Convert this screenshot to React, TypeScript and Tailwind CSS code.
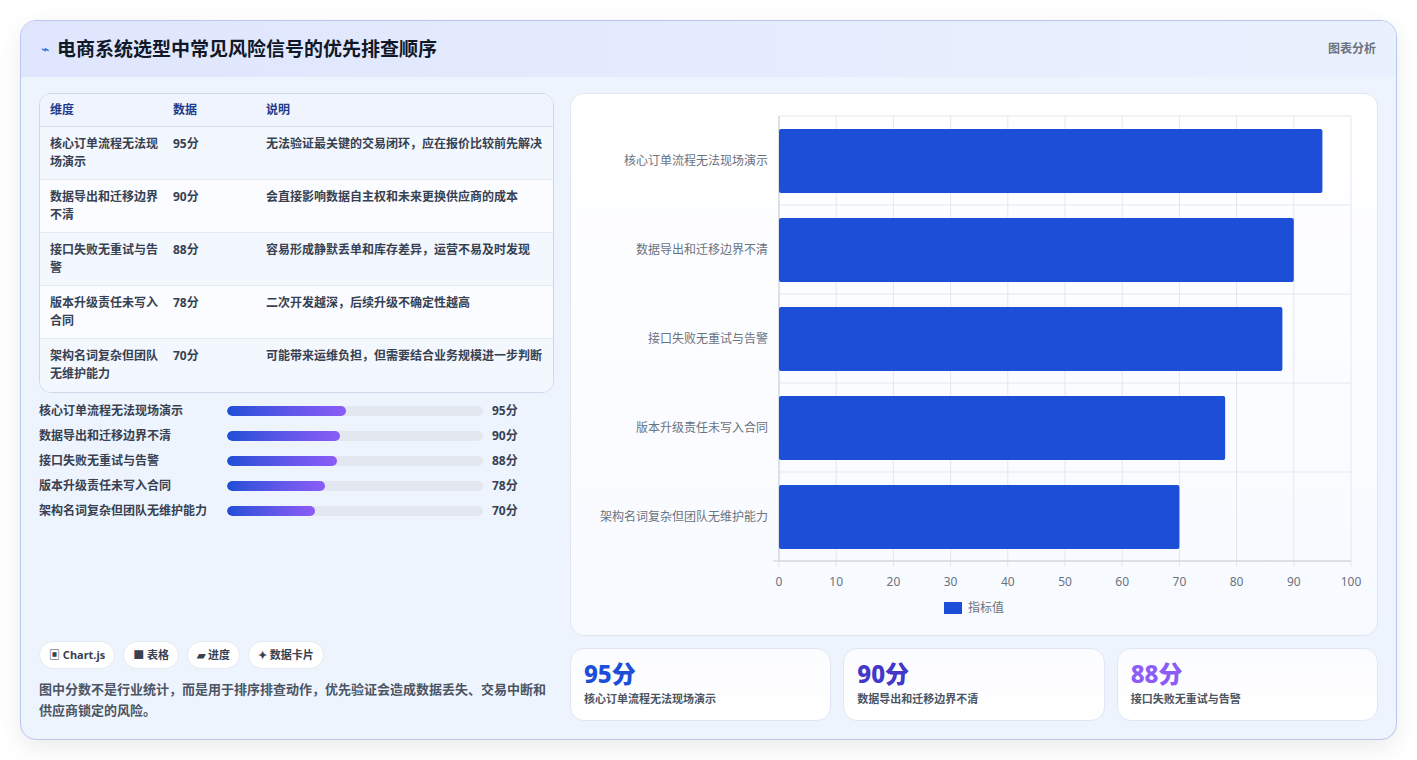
import React from "react";

const rows = [
  ["核心订单流程无法现场演示", 95, "无法验证最关键的交易闭环，应在报价比较前先解决"],
  ["数据导出和迁移边界不清", 90, "会直接影响数据自主权和未来更换供应商的成本"],
  ["接口失败无重试与告警", 88, "容易形成静默丢单和库存差异，运营不易及时发现"],
  ["版本升级责任未写入合同", 78, "二次开发越深，后续升级不确定性越高"],
  ["架构名词复杂但团队无维护能力", 70, "可能带来运维负担，但需要结合业务规模进一步判断"],
] as const;

function Chart() {
  const L = 208, R = 780, T = 22, B = 467;
  const w = R - L;
  const rh = (B - T) / 5;
  return (
    <svg width="806" height="542" className="block">
      {Array.from({ length: 11 }).map((_, i) => (
        <line key={i} x1={L + (w * i) / 10} x2={L + (w * i) / 10} y1={T} y2={B + 6} stroke="#e3e7ee" />
      ))}
      {Array.from({ length: 6 }).map((_, i) => (
        <line key={i} x1={L} x2={R} y1={T + rh * i} y2={T + rh * i} stroke="#e3e7ee" />
      ))}
      <line x1={L - 6} x2={R} y1={B} y2={B} stroke="#c9ced8" />
      <line x1={L} x2={L} y1={T} y2={B} stroke="#c9ced8" />
      {rows.map((r, i) => (
        <g key={i}>
          <rect x={L} y={T + rh * i + 13} width={(w * r[1]) / 100} height={64} fill="#1d4ed8" rx={2} />
          <text x={L - 11} y={T + rh * i + rh / 2 + 4} textAnchor="end" fontSize="12" fill="#6b7280" fontFamily="'Noto Sans CJK SC', sans-serif">{r[0]}</text>
        </g>
      ))}
      {Array.from({ length: 11 }).map((_, i) => (
        <text key={i} x={L + (w * i) / 10} y={B + 25} textAnchor="middle" fontSize="12" fill="#6b7280" fontFamily="'Noto Sans', sans-serif">{i * 10}</text>
      ))}
      <rect x={373} y={508} width={18} height={12} fill="#1d4ed8" />
      <text x={397} y={518} fontSize="12" fill="#6b7280" fontFamily="'Noto Sans CJK SC', sans-serif">指标值</text>
    </svg>
  );
}

export default function App() {
  const font = { fontFamily: "'Noto Sans', 'Noto Sans CJK SC', sans-serif" };
  return (
    <div className="w-[1417px] h-[760px] bg-white pt-5 pl-5" style={font}>
      <div className="w-[1377px] h-[720px] rounded-[16px] border border-[#b9c6ef] bg-[#eef4fe] shadow-[0_8px_24px_rgba(0,0,0,0.08)] overflow-hidden flex flex-col">
        <div className="h-[56px] shrink-0 bg-gradient-to-r from-[#dfe6fd] to-[#eaf1fe] flex items-center justify-between px-5">
          <div className="flex items-center gap-2">
            <span className="text-[#2563eb] text-[14px] leading-none">⌁</span>
            <span className="text-[19px] font-bold text-[#111827]">电商系统选型中常见风险信号的优先排查顺序</span>
          </div>
          <span className="text-[12px] font-bold text-[#6b7280]">图表分析</span>
        </div>
        <div className="flex gap-4 px-[18px] pt-4 pb-[18px] flex-1">
          <div className="w-[516px] flex flex-col">
            <div className="rounded-[12px] border border-[#cfd8ea] overflow-hidden bg-white">
              <div className="h-[33px] bg-[#eff4fe] border-b border-[#d7deeb] flex items-center text-[12px] font-bold text-[#1e3a8a]">
                <div className="w-[133px] pl-[10px]">维度</div>
                <div className="w-[93px]">数据</div>
                <div>说明</div>
              </div>
              {rows.map((r, i) => (
                <div key={i} className={`h-[53px] flex text-[12px] font-bold text-[#374151] leading-[18px] pt-[8px] ${i < 4 ? "border-b border-[#e5eaf2]" : ""} ${i % 2 === 0 ? "bg-[#f3f7fe]" : "bg-[#fafcff]"}`}>
                  <div className="w-[133px] pl-[10px] pr-2">{r[0]}</div>
                  <div className="w-[93px]">{r[1]}分</div>
                  <div className="flex-1">{r[2]}</div>
                </div>
              ))}
            </div>
            <div className="mt-[9px] flex flex-col gap-[7px]">
              {rows.map((r, i) => (
                <div key={i} className="flex items-center h-[18px] text-[12px] font-bold text-[#374151]">
                  <div className="w-[188px]">{r[0]}</div>
                  <div className="w-[256px] h-[10px] rounded-full bg-[#e2e7f0] overflow-hidden">
                    <div className="h-full rounded-full bg-gradient-to-r from-[#1d4ed8] to-[#8b5cf6]" style={{ width: `${r[1] * 0.49}%` }} />
                  </div>
                  <div className="ml-[9px]">{r[1]}分</div>
                </div>
              ))}
            </div>
            <div className="flex-1" />
            <div className="flex gap-2 text-[11px] font-bold text-[#374151]">
              {["▣ Chart.js", "■ 表格", "▰ 进度", "✦ 数据卡片"].map((c) => (
                <div key={c} className="h-[28px] px-[9px] rounded-full bg-white border border-[#e5eaf2] flex items-center">{c}</div>
              ))}
            </div>
            <p className="mt-[10px] text-[13px] font-bold text-[#4b5563] leading-[21px]">
              图中分数不是行业统计，而是用于排序排查动作，优先验证会造成数据丢失、交易中断和供应商锁定的风险。
            </p>
          </div>
          <div className="flex-1 flex flex-col gap-3">
            <div className="h-[543px] rounded-[14px] border border-[#e1e7f2] bg-gradient-to-b from-white to-[#f7faff] overflow-hidden">
              <Chart />
            </div>
            <div className="flex gap-3">
              {[
                ["95分", "text-[#1d4ed8]", rows[0][0]],
                ["90分", "text-[#4338ca]", rows[1][0]],
                ["88分", "text-[#8b5cf6]", rows[2][0]],
              ].map(([v, c, l]) => (
                <div key={v} className="flex-1 h-[73px] rounded-[14px] border border-[#e1e7f2] bg-gradient-to-b from-[#fbfcff] to-white px-[13px] pt-[10px]">
                  <div className={`text-[24px] font-extrabold leading-[30px] ${c}`}>{v}</div>
                  <div className="text-[11px] font-bold text-[#4b5563] mt-[2px]">{l}</div>
                </div>
              ))}
            </div>
          </div>
        </div>
      </div>
    </div>
  );
}
